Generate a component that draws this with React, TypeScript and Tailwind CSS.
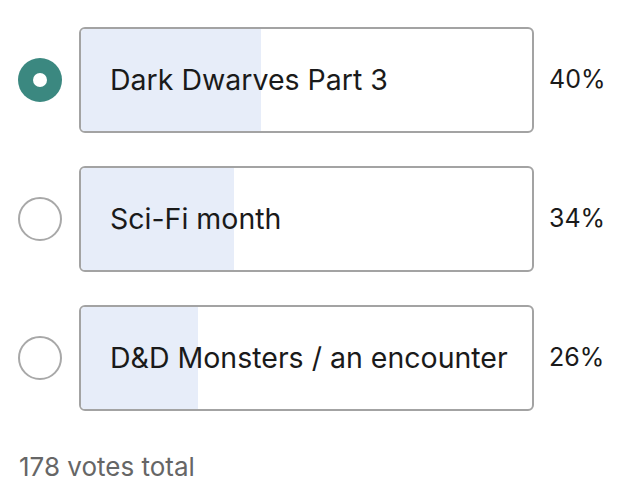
import React from 'react'

interface PollOption {
  label: string
  percent: number
  selected?: boolean
}

const options: PollOption[] = [
  { label: 'Dark Dwarves Part 3', percent: 40, selected: true },
  { label: 'Sci-Fi month', percent: 34 },
  { label: 'D&D Monsters / an encounter', percent: 26 },
]

function Radio({ selected }: { selected?: boolean }) {
  if (selected) {
    return (
      <div className="w-[44px] h-[44px] rounded-full bg-[#3b8880] flex items-center justify-center shrink-0">
        <div className="w-[14px] h-[14px] rounded-full bg-white" />
      </div>
    )
  }
  return <div className="w-[44px] h-[44px] rounded-full border-2 border-[#a8a8a8] bg-white shrink-0" />
}

function OptionRow({ option }: { option: PollOption }) {
  return (
    <div className="flex items-center">
      <Radio selected={option.selected} />
      <div className="relative ml-[17px] w-[455px] h-[106px] rounded-[6px] border-2 border-[#a3a3a3] overflow-hidden bg-white">
        <div className="absolute inset-y-0 left-0 bg-[#e7edf9]" style={{ width: `${option.percent}%` }} />
        <div className="relative h-full flex items-center pl-[29px] text-[28.5px] text-[#1a1a1a]">
          {option.label}
        </div>
      </div>
      <div className="ml-[15px] text-[25px] text-[#1a1a1a]">{option.percent}%</div>
    </div>
  )
}

export default function App() {
  return (
    <div className="w-[632px] h-[500px] bg-white pt-[27px] pl-[18px] font-['Inter',sans-serif]">
      <div className="flex flex-col gap-[33px]">
        {options.map((option) => (
          <OptionRow key={option.label} option={option} />
        ))}
      </div>
      <div className="mt-[36px] pl-[1px] text-[26px] text-[#666666]">178 votes total</div>
    </div>
  )
}
